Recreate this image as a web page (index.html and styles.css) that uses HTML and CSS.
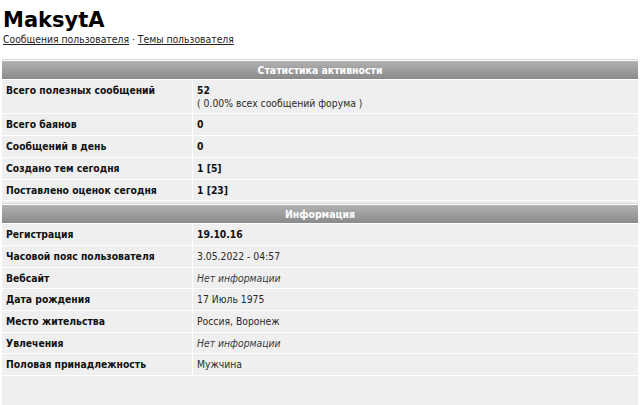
FILE: index.html
```html
<!DOCTYPE html>
<html lang="ru">
<head>
  <meta charset="UTF-8" />
  <title>MaksytA — профиль</title>
  <link rel="stylesheet" href="styles.css">
</head>
<body>
  <h1 class="nick">MaksytA</h1>
  <div class="user-links">
    <a href="#">Сообщения пользователя</a> · <a href="#">Темы пользователя</a>
  </div>

  <div class="profile">
    <table class="info">
      <tr><th colspan="2">Статистика активности</th></tr>
      <tr>
        <td class="label">Всего полезных сообщений</td>
        <td class="value"><b>52</b><br>( 0.00% всех сообщений форума )</td>
      </tr>
      <tr><td class="label">Всего баянов</td><td class="value"><b>0</b></td></tr>
      <tr><td class="label">Сообщений в день</td><td class="value"><b>0</b></td></tr>
      <tr><td class="label">Создано тем сегодня</td><td class="value"><b>1 [5]</b></td></tr>
      <tr><td class="label">Поставлено оценок сегодня</td><td class="value"><b>1 [23]</b></td></tr>
    </table>

    <table class="info">
      <tr><th colspan="2">Информация</th></tr>
      <tr><td class="label">Регистрация</td><td class="value"><b>19.10.16</b></td></tr>
      <tr><td class="label">Часовой пояс пользователя</td><td class="value">3.05.2022 - 04:57</td></tr>
      <tr><td class="label">Вебсайт</td><td class="value"><i>Нет информации</i></td></tr>
      <tr><td class="label">Дата рождения</td><td class="value">17 Июль 1975</td></tr>
      <tr><td class="label">Место жительства</td><td class="value">Россия, Воронеж</td></tr>
      <tr><td class="label">Увлечения</td><td class="value"><i>Нет информации</i></td></tr>
      <tr><td class="label">Половая принадлежность</td><td class="value">Мужчина</td></tr>
    </table>
  </div>
</body>
</html>
```

FILE: styles.css
```css
html, body {
  height: 100%;
}
body {
  margin: 0;
  padding: 0 2px;
  font-family: Tahoma, "DejaVu Sans Condensed", "DejaVu Sans", sans-serif;
  font-size: 10.3px;
  color: #111;
  background: #fff;
  display: flex;
  flex-direction: column;
  box-sizing: border-box;
}
.nick {
  margin: 8px 0 0 1px;
  font-family: Verdana, "DejaVu Sans", sans-serif;
  font-size: 21px;
  line-height: 24px;
  font-weight: bold;
  color: #000;
}
.user-links {
  margin: 1px 0 0 1px;
  line-height: 12px;
}
.user-links a {
  color: #222;
}
.profile {
  flex: 1;
  margin-top: 14px;
  background: #efefef;
}
.info {
  width: 100%;
  border-collapse: separate;
  border-spacing: 0;
  border-top: 1px solid #d4d4d4;
  background: #efefef;
}
.info:first-child {
  margin-bottom: 2px;
}
.info th {
  height: 18px;
  padding: 0;
  background: linear-gradient(#b2b2b2, #8a8a8a);
  color: #fff;
  font-size: 10.4px;
  font-weight: bold;
  text-align: center;
  border-top: 1px solid #fff;
  border-bottom: 1px solid #fff;
}
.info td {
  padding: 4px 5px 4px 4px;
  line-height: 12.7px;
  vertical-align: top;
  border-bottom: 1px solid #fff;
}
.label {
  width: 181px;
  font-weight: bold;
  border-right: 1px solid #fff;
}
.value {
  color: #2a2a2a;
}
.value b {
  color: #111;
}
.value i {
  color: #3a3a3a;
}
```
